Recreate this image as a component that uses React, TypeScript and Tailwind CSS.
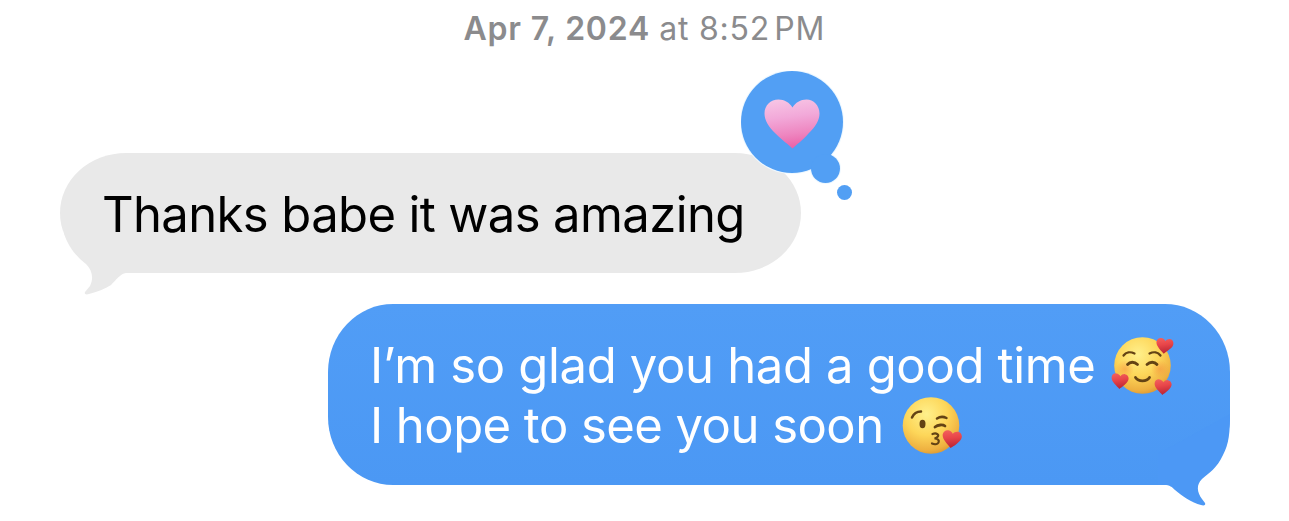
import type { ReactNode } from 'react';

const HEART = 'M28 49C24 45 18 41 11 34C4 27 0 21 0 14C0 6 6 0 14 0C20 0 25 3 28 8C31 3 36 0 42 0C49 0 55 6 55 14C55 21 51 27 44 34C38 41 32 45 28 49Z';

function EmojiDefs() {
  return (
    <svg width="0" height="0" className="absolute" aria-hidden="true">
      <defs>
        <radialGradient id="face" cx="0.42" cy="0.3" r="0.75">
          <stop offset="0" stopColor="#fff08c" />
          <stop offset="0.5" stopColor="#fdd659" />
          <stop offset="0.85" stopColor="#eeb040" />
          <stop offset="1" stopColor="#d89330" />
        </radialGradient>
        <linearGradient id="red" x1="0" y1="0" x2="0.3" y2="1">
          <stop offset="0" stopColor="#f4645f" />
          <stop offset="0.5" stopColor="#e84549" />
          <stop offset="1" stopColor="#bd2736" />
        </linearGradient>
        <radialGradient id="blush">
          <stop offset="0" stopColor="#f58a3c" stopOpacity="0.5" />
          <stop offset="1" stopColor="#f58a3c" stopOpacity="0" />
        </radialGradient>
        <linearGradient id="pink" x1="0.4" y1="0" x2="0.55" y2="1">
          <stop offset="0" stopColor="#f7c3e4" />
          <stop offset="0.35" stopColor="#f2a9d9" />
          <stop offset="0.7" stopColor="#ee86c0" />
          <stop offset="1" stopColor="#ea5fa6" />
        </linearGradient>
      </defs>
    </svg>
  );
}

function SmilingHearts() {
  return (
    <svg width="64" height="60" viewBox="0 0 64 60" className="shrink-0" role="img" aria-label="smiling face with hearts">
      <circle cx="31.5" cy="29.5" r="28.3" fill="url(#face)" />
      <circle cx="14" cy="33" r="9" fill="url(#blush)" />
      <circle cx="49" cy="33" r="9" fill="url(#blush)" />
      <g fill="none" stroke="#644314" strokeWidth="2.2" strokeLinecap="round">
        <path d="M12.500 19.500C15 16 19.500 15.500 23.500 17.500" />
        <path d="M38.500 17.500C42.500 15.500 47 16 49.500 19.500" />
        <path d="M16.500 28.500C19 25.500 23.500 25.500 26.500 28.500" strokeWidth="2.800" />
        <path d="M36 28.500C39 25.500 43.500 25.500 46 28.500" strokeWidth="2.800" />
        <path d="M24.500 41.500C27.500 46 35.500 46 38.500 41.500" strokeWidth="2.800" />
      </g>
      <g fill="url(#red)">
        <path d={HEART} transform="translate(46 1.500) rotate(7) scale(0.310)" />
        <path d={HEART} transform="translate(1 37) rotate(5) scale(0.310)" />
        <path d={HEART} transform="translate(44 43) rotate(5) scale(0.310)" />
      </g>
    </svg>
  );
}

function KissingHeart() {
  return (
    <svg width="60" height="60" viewBox="0 0 60 60" className="shrink-0" role="img" aria-label="face blowing a kiss">
      <circle cx="29" cy="29.500" r="28.300" fill="url(#face)" />
      <g fill="none" stroke="#644314" strokeLinecap="round">
        <path d="M10 21.500C11.500 18 15 15.500 19 15.500" strokeWidth="2.500" />
        <path d="M35 22.500C38 20.500 41.500 20.500 44.500 22" strokeWidth="2.500" />
        <path d="M33 31C36 28.500 41 28.500 43 30" strokeWidth="2.800" />
        <path d="M30.500 38C34.500 36.500 37 38.500 36 40.300C35.300 41.700 33.500 42.300 32.500 42.500C36 42.500 37.500 44.500 36.500 46.500C35.500 48.300 32.500 48.700 30 47.500" strokeWidth="2.200" />
      </g>
      <ellipse cx="20.500" cy="28" rx="3" ry="4.200" fill="#644314" />
      <path d={HEART} transform="translate(41.500 33.500) rotate(9) scale(0.350)" fill="url(#red)" />
    </svg>
  );
}

function LoveTapback() {
  return (
    <div className="absolute -top-[82px] left-[681px]">
      <svg width="112" height="132" viewBox="0 0 112 132" role="img" aria-label="loved">
        <g fill="#fff" stroke="#eef8ff" strokeWidth="2">
          <circle cx="51" cy="51" r="51" />
          <circle cx="84.500" cy="97.500" r="14.500" />
        </g>
        <g fill="#529ff4">
          <circle cx="51" cy="51" r="51" />
          <circle cx="84.500" cy="97.500" r="14.500" />
          <circle cx="103.500" cy="121.500" r="7.500" />
        </g>
        <path d={HEART} transform="translate(23.500 28.500)" fill="url(#pink)" />
      </svg>
    </div>
  );
}

function Received({ children }: { children: ReactNode }) {
  return (
    <div className="relative ml-[60px] flex h-[120px] w-[741px] items-center self-start rounded-[66px/60px] bg-[#e9e9e9] pt-[3px] pl-[42px] text-black">
      <svg width="80" height="62" viewBox="0 0 80 62" className="absolute top-[80px] left-0 text-[#e9e9e9]">
        <path
          fill="currentColor"
          d="M4 0C8 14 17 24 26 31C32 37 34 45 30 53L25 59C24 61 26 62 29 61C37 59 45 56 51 52C56 47 60 41 66 40L72 40V0Z"
        />
      </svg>
      {children}
    </div>
  );
}

function Sent({ children }: { children: ReactNode }) {
  return (
    <div className="relative mr-[59px] flex h-[181px] w-[902px] flex-col justify-center self-end rounded-[65px/68px] bg-[linear-gradient(#519df6,#4b98f4)] pt-[2px] pl-[42px] text-white">
      <svg width="90" height="112" viewBox="0 0 90 112" className="absolute top-[90px] right-0 text-[#4c98f5]">
        <path
          fill="currentColor"
          d="M90 20C90 38 89 50 83 61C77 74 69 79 62 85C56 91 57 98 62 105L65 109C66 111 64 112 61 111C52 109 41 101 35 96C32 93 30 91 24 91L18 91L18 60Z"
        />
      </svg>
      {children}
    </div>
  );
}

export default function App() {
  return (
    <main className="flex h-[521px] w-[1289px] flex-col overflow-hidden bg-white font-['Inter',sans-serif]">
      <EmojiDefs />
      <header className="flex h-[153px] items-start justify-center pt-[9px] text-[32px] leading-[39px] whitespace-nowrap text-[#8b8b8d]">
        <span className="font-semibold tracking-[0.8px]">Apr 7, 2024</span>
        <span className="ml-[9px] tracking-[0.8px]">at 8:52</span>
        <span className="ml-[4px] tracking-[1px]">PM</span>
      </header>

      <section className="flex flex-col gap-[31px] text-[49px] leading-[60px] whitespace-nowrap">
        <Received>
          <span className="relative tracking-[-0.62px]">Thanks babe it was amazing</span>
          <LoveTapback />
        </Received>
        <Sent>
          <div className="relative flex h-[60px] items-center">
            <span className="tracking-[-0.34px]">I’m so glad you had a good time</span>
            <span className="ml-[15px]"><SmilingHearts /></span>
          </div>
          <div className="relative flex h-[60px] items-center">
            <span className="tracking-[-0.54px]">I hope to see you soon</span>
            <span className="ml-[18px]"><KissingHeart /></span>
          </div>
        </Sent>
      </section>
    </main>
  );
}
